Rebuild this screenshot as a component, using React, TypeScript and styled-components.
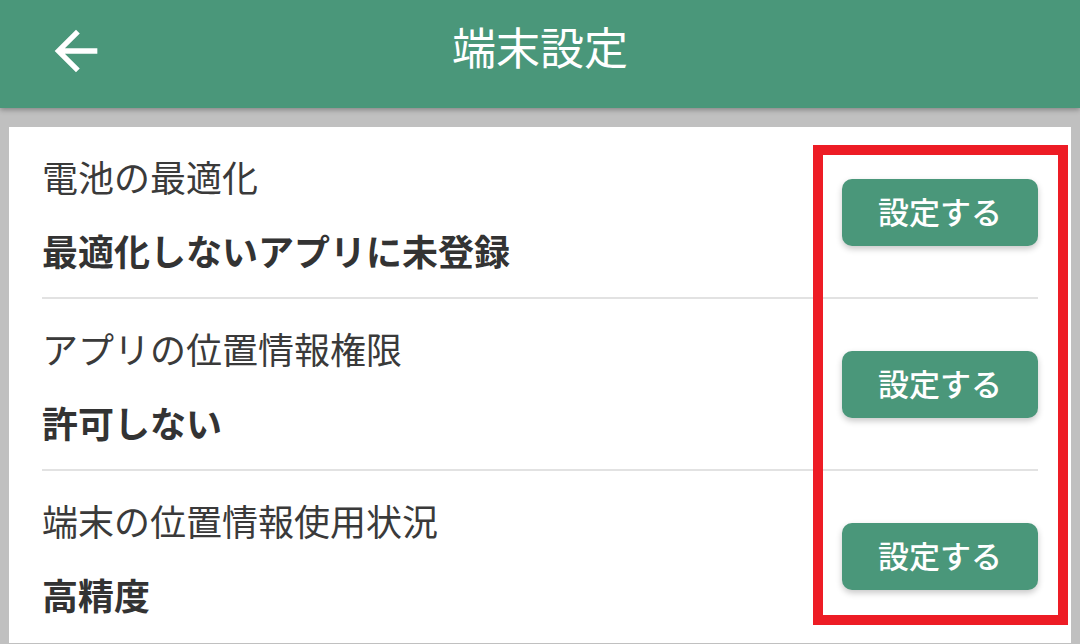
import React from "react";
import styled, { createGlobalStyle } from "styled-components";

const GlobalStyle = createGlobalStyle`
  html, body {
    margin: 0;
    padding: 0;
    background: #c0c0c0;
    font-family: "Noto Sans CJK JP", "Noto Sans", sans-serif;
  }
  * { box-sizing: border-box; }
`;

const Page = styled.div`
  width: 1080px;
  height: 644px;
  overflow: hidden;
  background: #c0c0c0;
  display: flex;
  flex-direction: column;
`;

const Header = styled.header`
  position: relative;
  z-index: 1;
  height: 108px;
  flex: none;
  background: #4a977a;
  box-shadow: 0 2px 5px rgba(0, 0, 0, 0.3);
  display: flex;
  align-items: center;
  justify-content: center;
  padding-bottom: 16px;
`;

const BackButton = styled.button`
  position: absolute;
  left: 44px;
  top: 19px;
  width: 64px;
  height: 64px;
  padding: 0;
  border: none;
  background: transparent;
  display: flex;
`;

const Title = styled.h1`
  margin: 0;
  color: #ffffff;
  font-size: 44px;
  font-weight: 400;
  line-height: 1;
`;

const Main = styled.main`
  flex: 1;
  padding: 19px 9px 1px 9px;
  display: flex;
`;

const Card = styled.section`
  position: relative;
  flex: 1;
  background: #ffffff;
  padding: 0 33px;
  display: flex;
  flex-direction: column;
`;

const Row = styled.div<{ $last?: boolean }>`
  height: 172px;
  flex: none;
  display: flex;
  align-items: center;
  justify-content: space-between;
  padding-bottom: ${(p) => (p.$last ? "2px" : "0")};
  border-bottom: ${(p) => (p.$last ? "none" : "2px solid #e2e2e2")};
`;

const Texts = styled.div`
  align-self: flex-start;
  padding-top: 25px;
  display: flex;
  flex-direction: column;
  gap: 26px;
`;

const Label = styled.div`
  font-size: 36px;
  line-height: 48px;
  font-weight: 400;
  color: #3a3a3a;
`;

const Value = styled.div`
  font-size: 36px;
  line-height: 48px;
  font-weight: 700;
  color: #333333;
`;

const ActionButton = styled.button`
  width: 196px;
  height: 67px;
  border: none;
  border-radius: 10px;
  background: #4a977a;
  color: #ffffff;
  font-family: "Noto Sans CJK JP", "Noto Sans", sans-serif;
  font-size: 31px;
  font-weight: 500;
  box-shadow: 0 3px 6px rgba(0, 0, 0, 0.22);
  padding: 0 0 3px 0;
`;

const Highlight = styled.div`
  position: absolute;
  left: 804px;
  top: 18px;
  width: 255px;
  height: 480px;
  border: 10px solid #ed1c25;
  pointer-events: none;
`;

const items = [
  { label: "電池の最適化", value: "最適化しないアプリに未登録" },
  { label: "アプリの位置情報権限", value: "許可しない" },
  { label: "端末の位置情報使用状況", value: "高精度" },
];

export default function App() {
  return (
    <Page>
      <GlobalStyle />
      <Header>
        <BackButton aria-label="戻る">
          <svg width="64" height="64" viewBox="0 0 24 24">
            <path
              fill="#ffffff"
              d="M20 11H7.83l5.59-5.59L12 4l-8 8 8 8 1.41-1.41L7.83 13H20v-2z"
            />
          </svg>
        </BackButton>
        <Title>端末設定</Title>
      </Header>
      <Main>
        <Card>
          {items.map((it, i) => (
            <Row key={it.label} $last={i === items.length - 1}>
              <Texts>
                <Label>{it.label}</Label>
                <Value>{it.value}</Value>
              </Texts>
              <ActionButton>設定する</ActionButton>
            </Row>
          ))}
          <Highlight />
        </Card>
      </Main>
    </Page>
  );
}
